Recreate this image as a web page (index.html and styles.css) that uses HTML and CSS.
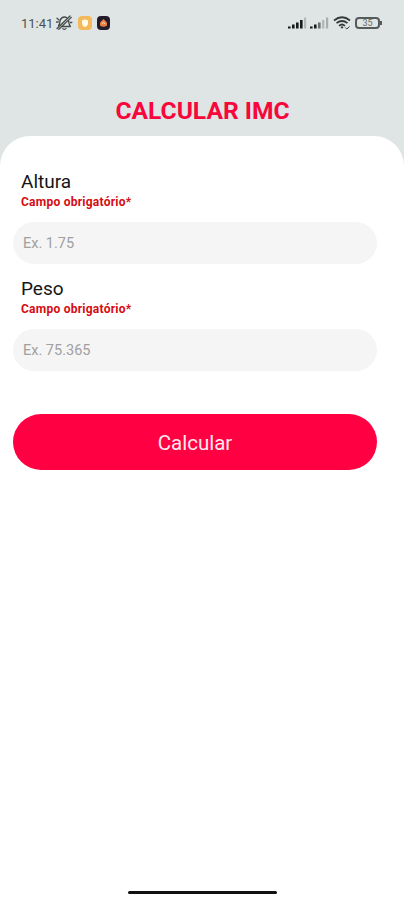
FILE: index.html
```html
<!DOCTYPE html>
<html lang="pt-BR">
<head>
  <meta charset="UTF-8" />
  <meta name="viewport" content="width=device-width, initial-scale=1.0"/>
  <title>Calcular IMC</title>
  <link rel="stylesheet" href="styles.css">
</head>
<body>

  <div class="status-bar">
    <span class="hora">11:41</span>
    <svg class="mudo" width="18" height="16" viewBox="0 0 18 16" fill="none" stroke="#454b4a" stroke-width="1.3" stroke-linecap="round" stroke-linejoin="round">
      <path d="M3.5 10.5C5.2 9 4.6 7 5.2 5.2C6 3 7.7 2 9.4 2C10.4 2 11.2 2.3 12 2.9M13.4 5.3C14 7.2 13.5 9.2 15.4 11.5H7"/>
      <path d="M7.8 13.6C8.8 14.6 10.3 14.5 11 13.5"/>
      <path d="M2 13.5L15 1M3.8 14.2L16.3 2.4"/>
      <path d="M2 3.2L4 5M1.5 7H3.2M15.4 7.5H16.8"/>
    </svg>
    <svg class="app" width="14" height="14" viewBox="0 0 14 14">
      <rect width="14" height="14" rx="4" fill="#f3b95a"/>
      <path d="M4 4.5Q7 2.6 10 4.5V8Q9.5 10.5 7 11Q4.5 10.5 4 8Z" fill="#fffbe8"/>
    </svg>
    <svg class="app app-escuro" width="13" height="14" viewBox="0 0 13 14">
      <rect width="13" height="14" rx="4" fill="#231b2b"/>
      <path d="M6.5 3L10 6.5V9.5Q6.5 12 3 9.5V6.5Z" fill="#e97e43"/>
      <path d="M5 8L6.5 6L8 8" fill="none" stroke="#ffd2a1"/>
    </svg>
    <div class="icones">
      <svg width="19" height="12" viewBox="0 0 19 12" fill="#171b1a">
        <rect x="0" y="9.5" width="2.6" height="2"/>
        <rect x="4" y="7.5" width="2.6" height="4"/>
        <rect x="8" y="5.5" width="2.6" height="6"/>
        <rect x="12" y="3" width="2.6" height="8.5"/>
        <rect x="16" y="0.5" width="2.2" height="11" fill="#b3b9b8"/>
      </svg>
      <svg width="19" height="12" viewBox="0 0 19 12" fill="#171b1a">
        <rect x="0" y="9.5" width="2.6" height="2"/>
        <rect x="4" y="7.5" width="2.6" height="4"/>
        <rect x="8" y="5.5" width="2.6" height="6" fill="#69706e"/>
        <rect x="12" y="3" width="2.4" height="8.5" fill="#b3b9b8"/>
        <rect x="16" y="0.5" width="2.2" height="11" fill="#a8aead"/>
      </svg>
      <svg class="wifi" width="18" height="14" viewBox="0 0 18 14" fill="none" stroke="#343938" stroke-width="1.7">
        <path d="M1 4.5Q9 -2 17 4.5M3.5 7.2Q9 2.8 14.5 7.2M6 9.8Q9 7.2 12 9.8"/>
        <path d="M9 10L7.5 11.2L9 12.8L10.5 11.2Z" fill="#343938" stroke="none"/>
        <path d="M12.3 11.5L13.8 13L16.5 10.5" stroke-width="1"/>
      </svg>
      <div class="bateria"><span>35</span></div>
    </div>
  </div>

  <header>
    <h1>CALCULAR IMC</h1>
  </header>

  <main>
    <form>
      <div class="campo">
        <label for="altura">Altura</label>
        <p class="erro">Campo obrigatório*</p>
        <input type="text" id="altura" placeholder="Ex. 1.75" />
      </div>
      <div class="campo">
        <label for="peso">Peso</label>
        <p class="erro">Campo obrigatório*</p>
        <input type="text" id="peso" placeholder="Ex. 75.365" />
      </div>
      <button type="button">Calcular</button>
    </form>
    <div class="barra-inicio"></div>
  </main>

</body>
</html>
```

FILE: styles.css
```css
* {
  box-sizing: border-box;
}

body {
  margin: 0;
  height: 900px;
  display: flex;
  flex-direction: column;
  font-family: Roboto, "Liberation Sans", sans-serif;
  background: #dee5e4;
  overflow: hidden;
}

/* Barra de status */
.status-bar {
  display: flex;
  align-items: center;
  height: 46px;
  padding: 0 22px 0 21px;
}

.hora {
  width: 34px;
  font-size: 13px;
  color: #4b5150;
}

.mudo {
  margin-right: 5px;
}

.app-escuro {
  margin-left: 5px;
}

.icones {
  display: flex;
  align-items: center;
  gap: 3px;
  margin-left: auto;
}

.wifi {
  margin-left: 1px;
}

.bateria {
  position: relative;
  width: 25px;
  height: 12px;
  margin: 0 2px 0 1px;
  border: 2px solid #555b5a;
  border-radius: 4px;
  color: #656b6a;
  font-size: 9px;
  line-height: 8px;
  text-align: center;
}

.bateria::after {
  content: "";
  position: absolute;
  top: 2px;
  right: -4px;
  width: 2px;
  height: 4px;
  background: #555b5a;
}

header {
  height: 90px;
  padding: 50px 0 0 1px;
  text-align: center;
}

h1 {
  margin: 0;
  font-size: 24.6px;
  line-height: 30px;
  font-weight: 700;
  color: #f8063c;
}

main {
  flex: 1;
  display: flex;
  flex-direction: column;
  padding: 34px 27px 6px 13px;
  background: white;
  border-radius: 30px 30px 0 0;
}

.campo {
  height: 107.4px;
}

label {
  display: block;
  padding-left: 8px;
  font-size: 19px;
  line-height: 24px;
  color: #151515;
}

.erro {
  margin: 0 0 12px;
  padding: 1px 0 0 8px;
  font-size: 12px;
  line-height: 15px;
  font-weight: 700;
  letter-spacing: 0.25px;
  color: #d50c12;
}

input {
  display: block;
  width: 100%;
  height: 42px;
  padding: 0 10px;
  border: none;
  border-radius: 21px;
  background: #f5f5f5;
  font-family: inherit;
  font-size: 14.5px;
}

input::placeholder {
  color: #a0a0a0;
}

button {
  display: block;
  width: 100%;
  height: 56px;
  margin-top: 29.2px;
  padding: 3px 0 0;
  border: none;
  border-radius: 28px;
  background: #ff0043;
  color: #ffe9ee;
  font-family: inherit;
  font-size: 20.5px;
  cursor: pointer;
}

.barra-inicio {
  width: 149px;
  height: 3px;
  margin: auto 0 0 115px;
  border-radius: 2px;
  background: #111;
}
```
